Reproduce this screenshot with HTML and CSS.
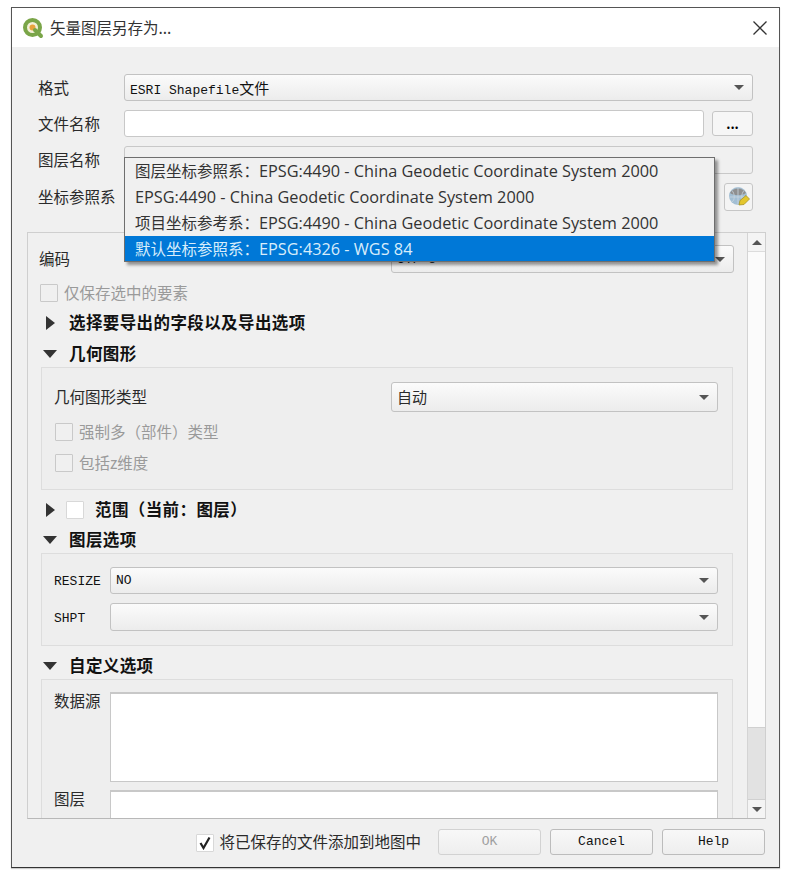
FILE: index.html
```html
<!DOCTYPE html>
<html lang="zh-CN">
<head>
    <meta charset="UTF-8">
    <meta name="viewport" content="width=device-width, initial-scale=1.0">
    <title>矢量图层另存为</title>
    <link rel="stylesheet" href="styles.css">
</head>
<body>
    <div class="window">
        <div class="titlebar">
            <svg class="logo" width="22" height="22" viewBox="0 0 22 22">
                <circle cx="10.5" cy="10.5" r="7.500" fill="#f3f0d8" stroke="#7aa548" stroke-width="4"/>
                <circle cx="10.5" cy="10.5" r="3" fill="#e8a33d"/>
                <path d="M13 13l6 6" stroke="#7aa548" stroke-width="4" stroke-linecap="round"/>
            </svg>
            <span class="title">矢量图层另存为...</span>
            <svg class="close" width="14" height="14" viewBox="0 0 14 14">
                <path d="M0.5 0.5L13.5 13.5M13.5 0.5L0.5 13.5" stroke="#333" stroke-width="1.3" fill="none"/>
            </svg>
        </div>

        <div class="form">
            <div class="row h27">
                <label class="form-label">格式</label>
                <div class="combo grow mono"><span>ESRI Shapefile<span class="cjk">文件</span></span><i class="caret"></i></div>
            </div>
            <div class="row h27">
                <label class="form-label">文件名称</label>
                <div class="input grow"></div>
                <button class="dots">...</button>
            </div>
            <div class="row h28">
                <label class="form-label">图层名称</label>
                <div class="input disabled grow"></div>
            </div>
            <div class="row h28">
                <label class="form-label">坐标参照系</label>
                <div class="grow"></div>
                <button class="crs-btn">
                    <svg width="24" height="24" viewBox="0 0 24 24">
                        <circle cx="11" cy="11" r="9" fill="#a3bfd4"/>
                        <path d="M3 8C6 2 16 2 19 8C15 11 7 11 3 8Z" fill="#8f8f8f"/>
                        <path d="M2.5 12H19.500M11 2V20M5 5.500C8 9 8 15 5 17M17 5.500C14 9 14 15 17 17" stroke="#c9d6df" stroke-width=".8" fill="none"/>
                        <path d="M12 20L13 15.500L19 10.500L22.500 14L17 19.500Z" fill="#e3c62e" stroke="#a08c1c" stroke-width=".7"/>
                    </svg>
                </button>
            </div>
        </div>

        <div class="scroll-area">
            <div class="scroll-content">
                <div class="row enc-row">
                    <label>编码</label>
                    <div class="combo enc-combo mono"><span>UTF-8</span><i class="caret"></i></div>
                </div>
                <div class="check-row first-check">
                    <span class="check"></span>
                    <span class="muted">仅保存选中的要素</span>
                </div>

                <div class="head head-a"><i class="tri-right"></i><span class="head-text">选择要导出的字段以及导出选项</span></div>
                <div class="head head-a"><i class="tri-down"></i><span class="head-text">几何图形</span></div>
                <div class="group geom">
                    <div class="row geom-row">
                        <label>几何图形类型</label>
                        <div class="combo geom-combo"><span>自动</span><i class="caret"></i></div>
                    </div>
                    <div class="check-row geom-check">
                        <span class="check"></span>
                        <span class="muted">强制多（部件）类型</span>
                    </div>
                    <div class="check-row geom-check2">
                        <span class="check"></span>
                        <span class="muted">包括z维度</span>
                    </div>
                </div>

                <div class="head head-b">
                    <i class="tri-right"></i>
                    <span class="check white"></span>
                    <span class="head-text">范围（当前：图层）</span>
                </div>
                <div class="head head-b"><i class="tri-down"></i><span class="head-text">图层选项</span></div>
                <div class="group layer-opts">
                    <div class="row h27">
                        <label class="opt-label mono">RESIZE</label>
                        <div class="combo grow mono"><span>NO</span><i class="caret"></i></div>
                    </div>
                    <div class="row h28 shpt">
                        <label class="opt-label mono">SHPT</label>
                        <div class="combo grow"><i class="caret end"></i></div>
                    </div>
                </div>

                <div class="head head-c"><i class="tri-down"></i><span class="head-text">自定义选项</span></div>
                <div class="group custom">
                    <div class="row text-row">
                        <label class="opt-label">数据源</label>
                        <div class="textbox grow"></div>
                    </div>
                    <div class="row text-row small">
                        <label class="opt-label">图层</label>
                        <div class="textbox grow"></div>
                    </div>
                </div>
            </div>
            <div class="scrollbar">
                <div class="sb-btn"><i class="sb-up"></i></div>
                <div class="sb-track"></div>
                <div class="sb-thumb"></div>
                <div class="sb-btn"><i class="sb-down"></i></div>
            </div>
        </div>

        <div class="bottom">
            <span class="check white checked">
                <svg width="14" height="14" viewBox="0 0 14 14"><path d="M2.500 7L5.500 12L11.500 1.500" stroke="#222" stroke-width="2.200" fill="none"/></svg>
            </span>
            <span class="add-text">将已保存的文件添加到地图中</span>
            <button class="btn mono off">OK</button>
            <button class="btn mono">Cancel</button>
            <button class="btn mono">Help</button>
        </div>

        <!-- 下拉列表盖在表单上面 -->
        <div class="popup">
            <div class="item"><span class="cn">图层坐标参照系：</span>EPSG:4490 - China Geodetic Coordinate System 2000</div>
            <div class="item">EPSG:4490 - China Geodetic Coordinate System 2000</div>
            <div class="item"><span class="cn">项目坐标参考系：</span>EPSG:4490 - China Geodetic Coordinate System 2000</div>
            <div class="item selected"><span class="cn">默认坐标参照系：</span>EPSG:4326 - WGS 84</div>
        </div>
    </div>
</body>
</html>
```

FILE: styles.css
```css
* { box-sizing: border-box; }

body {
    margin: 0;
    padding: 7px 11px;
    background: white;
    font-family: "Noto Sans CJK SC", sans-serif;
    font-size: 15.5px;
    color: #2a2a2a;
}

.window {
    position: relative;
    width: 769px;
    height: 861px;
    display: flex;
    flex-direction: column;
    background: #f0f0f0;
    border: 1px solid #555;
    border-bottom-color: #333;
    box-shadow: 0 1px 1px rgba(0,0,0,0.2);
}

.titlebar {
    height: 39px;
    flex: none;
    display: flex;
    align-items: center;
    padding: 0 12px 0 10px;
    background: white;
}
.logo { margin-right: 6px; }
.title { font-size: 15.5px; color: #333; flex: 1; padding-bottom: 2px; }

.form { padding: 27px 26px 0 26px; flex: none; }
.row { display: flex; align-items: center; }
.h27 { height: 27px; }
.h28 { height: 28px; }
.form .row { margin-bottom: 9px; }
.form-label { width: 86px; flex: none; }
.grow { flex: 1; min-width: 0; }

label, .muted, .add-text, .head-text { padding-bottom: 2px; }

.mono { font-family: "Liberation Mono", "Noto Sans CJK SC", monospace; font-size: 13px; color: #111; }
.cjk { font-family: "Noto Sans CJK SC", sans-serif; font-size: 15px; }

.combo {
    height: 100%;
    display: flex;
    align-items: center;
    justify-content: space-between;
    padding: 0 8px 0 5px;
    border: 1px solid #c2c2c2;
    border-radius: 3px;
    background: linear-gradient(#fbfbfb, #ececec);
}
.caret {
    width: 0;
    height: 0;
    border-left: 5px solid transparent;
    border-right: 5px solid transparent;
    border-top: 5px solid #555;
}
.caret.end { margin-left: auto; }

.input {
    height: 100%;
    background: white;
    border: 1px solid #c8c8c8;
    border-radius: 3px;
}
.input.disabled { background: #f0f0f0; }

button { font-family: inherit; padding: 0; }
.dots {
    width: 41px;
    height: 25px;
    margin-left: 8px;
    background: #f6f6f6;
    border: 1px solid #c6c6c6;
    border-radius: 3px;
    font-size: 13px;
    font-weight: bold;
    line-height: 14px;
}
.crs-btn {
    width: 29px;
    height: 28px;
    display: flex;
    align-items: center;
    justify-content: center;
    background: #f4f4f4;
    border: 1px solid #c6c6c6;
    border-radius: 3px;
}

.scroll-area {
    flex: 1;
    min-height: 0;
    margin: 12px 13px 0 15px;
    display: flex;
    border: 1px solid #cfcfcf;
    border-bottom-color: #b8b8b8;
    overflow: hidden;
}
.scroll-content {
    flex: 1;
    min-width: 0;
    padding-left: 11px;
    overflow: hidden;
}

.enc-row { margin-top: 12px; height: 28px; justify-content: space-between; padding-right: 13px; }
.enc-combo { width: 343px; }

.check-row { display: flex; align-items: center; height: 18px; }
.check {
    width: 18px;
    height: 18px;
    flex: none;
    border: 1px solid #c9c9c9;
    border-radius: 1px;
    background: #f0f0f0;
}
.check.white { background: white; border-color: #d8d8d8; }
.muted { color: #9a9a9a; margin-left: 6px; }
.first-check { margin: 11px 0 0 1px; }

.head { display: flex; align-items: center; height: 20px; font-size: 16.5px; font-weight: bold; color: #111; }
.head-a { margin-top: 11px; }
.head-b { margin-top: 10px; }
.head-c { margin-top: 10px; }
.head-text { letter-spacing: 0.4px; white-space: nowrap; }
.tri-right, .tri-down { flex: none; width: 0; height: 0; }
.tri-right {
    margin: 0 14px 0 7px;
    border-top: 7px solid transparent;
    border-bottom: 7px solid transparent;
    border-left: 9px solid #333;
}
.tri-down {
    margin: 0 12px 0 4px;
    border-left: 7px solid transparent;
    border-right: 7px solid transparent;
    border-top: 8px solid #333;
}
.head .check { margin: 0 11px 0 -3px; }

.group {
    margin: 3px 14px 0 2px;
    padding: 14px 14px 0 12px;
    border: 1px solid #dddddd;
    background: #eeeeee;
}
.geom { height: 123px; }
.geom-row { height: 30px; justify-content: space-between; }
.geom-combo { width: 327px; }
.geom-combo span { font-size: 15px; padding-bottom: 2px; }
.geom-check { margin: 11px 0 0 1px; }
.geom-check2 { margin: 13px 0 0 1px; }

.layer-opts { height: 93px; padding-top: 13px; }
.shpt { margin-top: 9px; }
.opt-label { width: 56px; flex: none; }
.opt-label.mono { padding: 2px 0 0; }

.custom { height: 160px; padding-top: 12px; }
.text-row { height: 90px; align-items: flex-start; }
.text-row label { margin-top: -3px; }
.text-row.small { margin-top: 8px; height: 40px; }
.textbox {
    height: 100%;
    background: white;
    border: 1px solid #c8c8c8;
    border-top-width: 2px;
}

.scrollbar {
    width: 18px;
    flex: none;
    display: flex;
    flex-direction: column;
    border-left: 1px solid #d4d4d4;
}
.sb-btn {
    height: 18px;
    flex: none;
    display: flex;
    align-items: center;
    justify-content: center;
    background: #f4f4f4;
}
.sb-track { flex: 1; background: #fbfbfb; border-top: 1px solid #dcdcdc; }
.sb-thumb { height: 73px; flex: none; background: #e2e2e2; border-top: 1px solid #d0d0d0; border-bottom: 1px solid #d0d0d0; }
.sb-up, .sb-down {
    width: 0;
    height: 0;
    border-left: 5px solid transparent;
    border-right: 5px solid transparent;
}
.sb-up { border-bottom: 5px solid #555; }
.sb-down { border-top: 5px solid #555; }

.bottom {
    height: 48px;
    flex: none;
    display: flex;
    align-items: center;
    justify-content: flex-end;
    padding: 0 14px 3px 0;
}
.checked { display: flex; align-items: center; justify-content: center; margin-top: 3px; }
.add-text { margin: 0 17px 0 5px; white-space: nowrap; }
.btn {
    width: 103px;
    height: 26px;
    margin-left: 9px;
    background: linear-gradient(#f8f8f8, #eeeeee);
    border: 1px solid #bcbcbc;
    border-radius: 3px;
}
.add-text + .btn { margin-left: 0; }
.btn.off { color: #a0a0a0; border-color: #d2d2d2; }

.popup {
    position: absolute;
    left: 112px;
    top: 149px;
    width: 591px;
    height: 105px;
    background: #f0f0f0;
    border: 1px solid #6e6e6e;
    box-shadow: 3px 3px 3px rgba(0,0,0,0.4);
    font-family: "Open Sans", "Noto Sans CJK SC", sans-serif;
    font-size: 16.3px;
    color: #333;
}
.cn { font-size: 15.5px; }
.item {
    height: 26px;
    line-height: 26px;
    padding-left: 10px;
    white-space: nowrap;
}
.item.selected { background: #0078d7; color: #d8edfb; height: 25px; }
```
